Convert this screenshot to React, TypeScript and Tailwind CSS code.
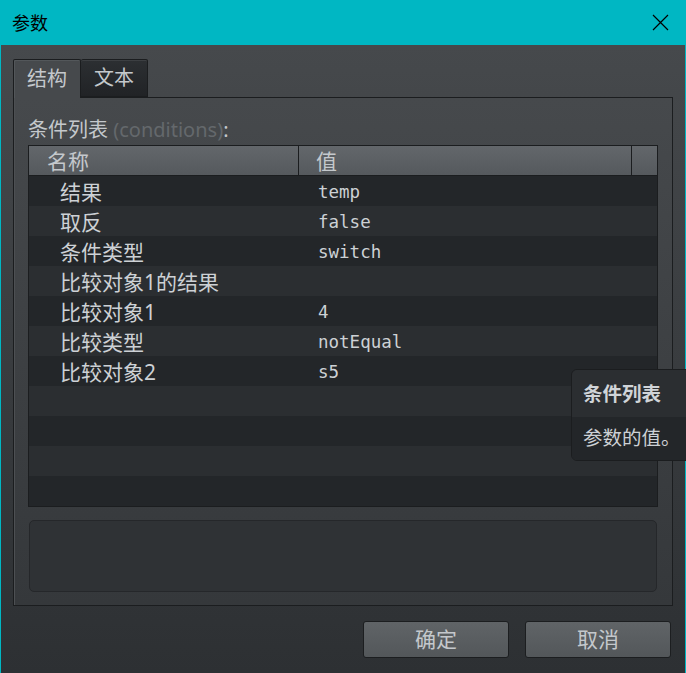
import React from 'react'

const rows: [string, string][] = [
  ['结果', 'temp'],
  ['取反', 'false'],
  ['条件类型', 'switch'],
  ['比较对象1的结果', ''],
  ['比较对象1', '4'],
  ['比较类型', 'notEqual'],
  ['比较对象2', 's5'],
  ['', ''],
  ['', ''],
  ['', ''],
  ['', ''],
]

const cjk = "font-['Noto_Sans','Noto_Sans_CJK_SC',sans-serif]"
const mono = "font-['DejaVu_Sans_Mono','Liberation_Mono',monospace]"

export default function App() {
  return (
    <div className={`relative w-[686px] h-[673px] overflow-hidden ${cjk}`}>
      <div className="flex flex-col w-full h-full border-x border-b border-[#00b7c3]">
        {/* Title bar */}
        <div className="flex items-center justify-between h-[45px] bg-[#00b7c3] -mx-px pl-[12px] pr-[17px] shrink-0">
          <span className="text-[18px] text-black leading-none">参数</span>
          <svg width="17" height="17" viewBox="0 0 17 17" className="text-black">
            <path d="M1 1L16 16M16 1L1 16" stroke="currentColor" strokeWidth="1.2" />
          </svg>
        </div>

        {/* Body */}
        <div className="flex flex-col flex-1 bg-gradient-to-b from-[#46494c] to-[#2d3033] px-[12px] pt-[14px] pb-[15px]">
          {/* Tabs */}
          <div className="flex h-[38px] items-end">
            <div className="relative z-10 flex items-center justify-center w-[68px] h-[39px] -mb-px bg-[#46494c] border border-b-0 border-[#1b1d1f] rounded-t-[2px] shadow-[inset_1px_1px_0_#53575a] text-[20px] text-[#c4c8cc]">
              结构
            </div>
            <div className="flex items-center justify-center w-[67px] h-[38px] bg-gradient-to-b from-[#2c2f32] to-[#212326] border border-l-0 border-[#1b1d1f] rounded-t-[2px] shadow-[inset_0_1px_0_#3c3f42] text-[20px] text-[#c4c8cc]">
              文本
            </div>
          </div>

          {/* Tab panel */}
          <div className="flex flex-col h-[509px] bg-gradient-to-b from-[#46494c] to-[#35383b] border border-[#1b1d1f] shadow-[inset_1px_0_0_#4d5053] px-[14px] pt-[19px]">
            <div className="text-[20px] leading-[26px] h-[28px] text-[#c4c8cc]">
              条件列表 <span className="text-[#64686c]">(conditions)</span>:
            </div>

            {/* Table */}
            <div className="flex flex-col w-[630px] border border-[#1b1d1f] bg-[#232629]">
              <div className="flex h-[30px] bg-gradient-to-b from-[#63676b] to-[#55595d] border-b border-[#1b1d1f] text-[21px] text-[#c4c8cc]">
                <div className="w-[270px] border-r border-[#1b1d1f] pl-[18px] pt-[2px] flex items-center">名称</div>
                <div className="w-[333px] border-r border-[#1b1d1f] pl-[17px] pt-[2px] flex items-center">值</div>
                <div className="flex-1" />
              </div>
              {rows.map(([name, value], i) => (
                <div
                  key={i}
                  className={`flex h-[30px] items-center pt-[3px] ${i % 2 === 0 ? 'bg-[#232629]' : 'bg-[#2b2e31]'}`}
                >
                  <div className="w-[270px] pl-[31px] text-[21px] leading-[27px] text-[#cdd1d5] whitespace-nowrap">{name}</div>
                  <div className={`pl-[19px] text-[17.5px] leading-[27px] text-[#cdd1d5] ${mono}`}>{value}</div>
                </div>
              ))}
            </div>

            {/* Description */}
            <div className="mt-[13px] w-[628px] ml-px h-[72px] rounded-[5px] border border-[#25272a] bg-[#2f3235]" />
          </div>

          {/* Buttons */}
          <div className="flex justify-end gap-[16px] mt-[15px] pr-[2px]">
            <button className="w-[146px] h-[37px] rounded-[3px] border border-[#1c1e20] bg-gradient-to-b from-[#606467] to-[#53575a] text-[21px] text-[#c4c8cc]">
              确定
            </button>
            <button className="w-[146px] h-[37px] rounded-[3px] border border-[#1c1e20] bg-gradient-to-b from-[#606467] to-[#53575a] text-[21px] text-[#c4c8cc]">
              取消
            </button>
          </div>
        </div>
      </div>

      {/* Tooltip */}
      <div className="absolute left-[571px] top-[369px] w-[130px] flex flex-col border border-[#1b1d1f] rounded-l-[6px] overflow-hidden">
        <div className="h-[47px] bg-[#2b2e31] pl-[11px] flex items-center text-[19.5px] font-bold text-[#d0d4d8]">
          条件列表
        </div>
        <div className="h-[43px] bg-[#232629] pl-[11px] flex items-center text-[19.5px] text-[#cdd1d5] pb-[2px]">
          参数的值。
        </div>
      </div>
    </div>
  )
}
